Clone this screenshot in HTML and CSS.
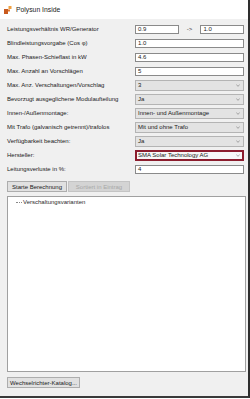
FILE: index.html
```html
<!DOCTYPE html>
<html lang="de">
<head>
  <meta charset="UTF-8" />
  <title>Polysun Inside</title>
  <link rel="stylesheet" href="styles.css">
</head>
<body>
  <div class="window">
    <div class="titlebar">
      <svg class="logo" width="8" height="8" viewBox="0 0 8 8">
        <rect x="4.5" y="0" width="3" height="3" fill="#f0a040"/>
        <rect x="0" y="3" width="4" height="5" fill="#c85a1e"/>
        <rect x="4" y="3.5" width="2" height="2" fill="#e07a30"/>
      </svg>
      <span class="title">Polysun Inside</span>
    </div>

    <div class="content">
      <div class="form">
        <label>Leistungsverhältnis WR/Generator</label>
        <div class="pair">
          <div class="field input">0.9</div>
          <span class="arrow">-&gt;</span>
          <div class="field input">1.0</div>
        </div>

        <label>Blindleistungsvorgabe (Cos φ)</label>
        <div class="field input">1.0</div>

        <label>Max. Phasen-Schieflast in kW</label>
        <div class="field input">4.6</div>

        <label>Max. Anzahl an Vorschlägen</label>
        <div class="field input">5</div>

        <label>Max. Anz. Verschaltungen/Vorschlag</label>
        <div class="field combo">3<svg class="chev" viewBox="0 0 6 4"><path d="M0.5 0.8 L3 3.2 L5.5 0.8" /></svg></div>

        <label>Bevorzugt ausgeglichene Modulaufteilung</label>
        <div class="field combo">Ja<svg class="chev" viewBox="0 0 6 4"><path d="M0.5 0.8 L3 3.2 L5.5 0.8" /></svg></div>

        <label>Innen-/Außenmontage:</label>
        <div class="field combo">Innen- und Außenmontage<svg class="chev" viewBox="0 0 6 4"><path d="M0.5 0.8 L3 3.2 L5.5 0.8" /></svg></div>

        <label>Mit Trafo (galvanisch getrennt)/trafolos</label>
        <div class="field combo">Mit und ohne Trafo<svg class="chev" viewBox="0 0 6 4"><path d="M0.5 0.8 L3 3.2 L5.5 0.8" /></svg></div>

        <label>Verfügbarkeit beachten:</label>
        <div class="field combo">Ja<svg class="chev" viewBox="0 0 6 4"><path d="M0.5 0.8 L3 3.2 L5.5 0.8" /></svg></div>

        <label>Hersteller:</label>
        <div class="field combo focused">SMA Solar Technology AG<svg class="chev" viewBox="0 0 6 4"><path d="M0.5 0.8 L3 3.2 L5.5 0.8" /></svg></div>

        <label>Leitungsverluste in %:</label>
        <div class="field input">4</div>
      </div>

      <div class="actions">
        <button class="btn">Starte Berechnung</button>
        <button class="btn disabled">Sortiert in Eintrag</button>
      </div>

      <div class="tree">
        <div class="node"><span class="branch"></span>Verschaltungsvarianten</div>
      </div>

      <div class="footer">
        <button class="btn">Wechselrichter-Katalog...</button>
      </div>
    </div>
  </div>
</body>
</html>
```

FILE: styles.css
```css
body {
  margin: 0;
  background: #ffffff;
  font-family: 'Liberation Sans', Arial, sans-serif;
  font-size: 6px;
  color: #1a1a1a;
}
.window {
  width: 248px;
  height: 396px;
  border-right: 2px solid #2e2e2e;
  border-bottom: 2px solid #3a3a3a;
  background: #f0f0f0;
  display: flex;
  flex-direction: column;
}
.titlebar {
  height: 19px;
  background: #ffffff;
  display: flex;
  align-items: center;
  padding-left: 4px;
  gap: 4px;
}
.title {
  font-size: 6.8px;
  color: #222;
}
.content {
  flex: 1;
  display: flex;
  flex-direction: column;
  padding: 3px 2px 8px 7px;
}
.form {
  display: grid;
  grid-template-columns: 128px 109px;
  grid-auto-rows: 14px;
  align-items: center;
}
label {
  white-space: nowrap;
  color: #1a1a1a;
}
.pair {
  display: flex;
  align-items: center;
}
.pair .field {
  width: 44px;
}
.arrow {
  width: 22px;
  text-align: center;
  color: #333;
}
.field {
  box-sizing: border-box;
  display: flex;
  align-items: center;
  padding-left: 2px;
  white-space: nowrap;
}
.input {
  height: 9px;
  background: #ffffff;
  border: 1px solid #8a8a8a;
}
.combo {
  height: 11px;
  background: #e3e3e3;
  border: 1px solid #b4b4b4;
  justify-content: space-between;
  padding-right: 3px;
}
.combo.focused {
  background: #f7f7f7;
  border: 2px solid #8c1d2e;
  padding-left: 1px;
  padding-right: 2px;
}
.chev {
  width: 4px;
  height: 3px;
}
.chev path {
  fill: none;
  stroke: #707070;
  stroke-width: 0.9;
}
.actions {
  display: flex;
  gap: 1px;
  margin-top: 5px;
}
.btn {
  box-sizing: border-box;
  height: 11px;
  padding: 0 6px;
  font-family: inherit;
  font-size: 6px;
  color: #1a1a1a;
  background: #e1e1e1;
  border: 1px solid #adadad;
  border-radius: 0;
  white-space: nowrap;
}
.actions .btn {
  width: 60px;
  padding: 0;
}
.btn.disabled {
  width: 62px;
  background: #d4d4d4;
  border-color: #c4c4c4;
  color: #a8a8a8;
}
.tree {
  box-sizing: border-box;
  height: 176px;
  margin-top: 4px;
  background: #ffffff;
  border: 1px solid #a0a0a0;
  padding: 2px 0 0 8px;
}
.node {
  display: flex;
  align-items: center;
  color: #2a2a2a;
}
.branch {
  display: inline-block;
  width: 6px;
  border-top: 1px dotted #888;
  margin-right: 1px;
}
.footer {
  margin-top: 5px;
}
.footer .btn {
  width: 73px;
  padding: 0;
}
```
